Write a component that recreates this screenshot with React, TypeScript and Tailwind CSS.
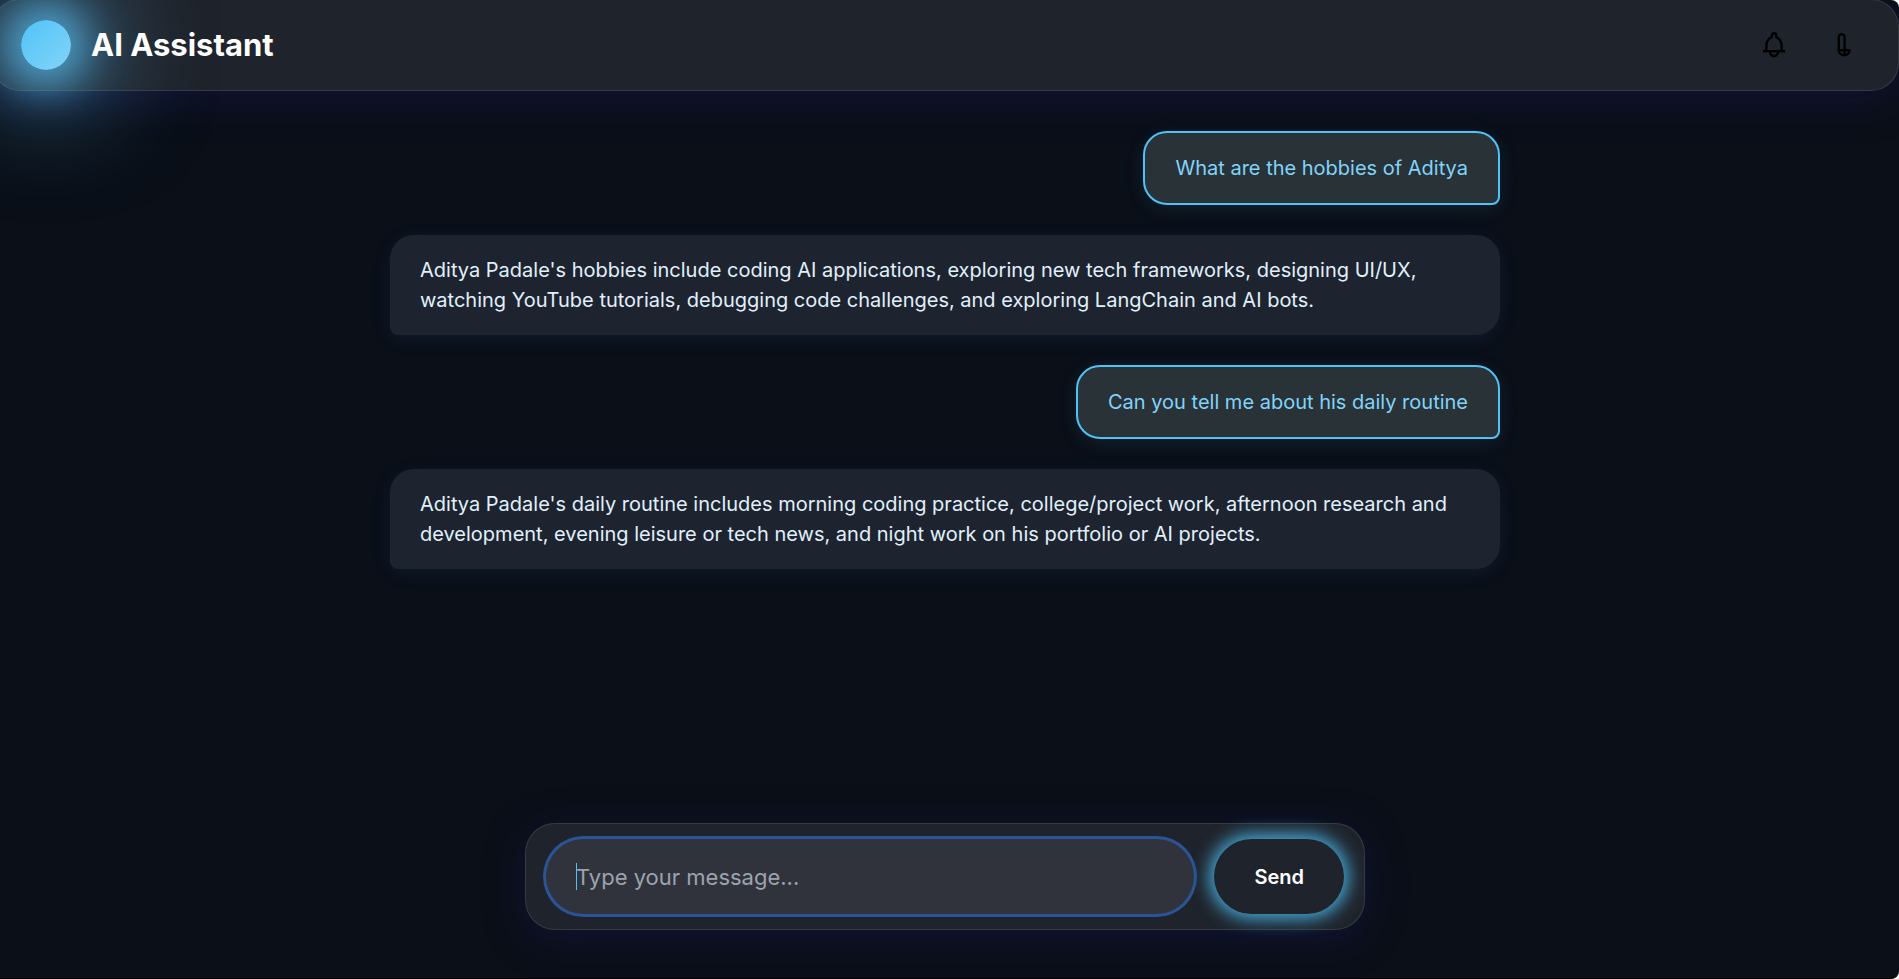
import { useState } from "react";

type Message = { id: number; from: "user" | "bot"; text: string };

const messages: Message[] = [
  { id: 1, from: "user", text: "What are the hobbies of Aditya" },
  {
    id: 2,
    from: "bot",
    text: "Aditya Padale's hobbies include coding AI applications, exploring new tech frameworks, designing UI/UX, watching YouTube tutorials, debugging code challenges, and exploring LangChain and AI bots.",
  },
  { id: 3, from: "user", text: "Can you tell me about his daily routine" },
  {
    id: 4,
    from: "bot",
    text: "Aditya Padale's daily routine includes morning coding practice, college/project work, afternoon research and development, evening leisure or tech news, and night work on his portfolio or AI projects.",
  },
];

function BellIcon() {
  return (
    <svg width="24" height="28" viewBox="0 0 24 28" fill="none" stroke="#000" strokeWidth="2.4" strokeLinejoin="round" aria-hidden="true">
      <path d="M3 20.2c1.2-.6 1.4-1.4 1.4-2.6v-3.1c0-3.6 1.7-6.4 4.9-8.2.4-.3.6-.6.6-1.1V4.3a2.1 2.1 0 0 1 4.2 0v.9c0 .5.2.8.6 1.1 3.2 1.8 4.9 4.6 4.9 8.2v3.1c0 1.2.2 2 1.4 2.6" />
      <path d="M1 20.2h22" />
      <path d="M8 21a4 4 0 0 0 8 0" />
    </svg>
  );
}

function SpoonIcon() {
  return (
    <svg width="24" height="28" viewBox="0 0 24 28" fill="none" stroke="#000" strokeWidth="2.4" strokeLinejoin="round" aria-hidden="true">
      <path d="M6.8 19.2V6a2.9 2.9 0 0 1 5.8 0v18" />
      <path d="M6.8 19.2h10.7c0 3-2.2 5-5.3 5s-5.400-2-5.400-5z" />
    </svg>
  );
}

function Bubble({ message }: { message: Message }) {
  return message.from === "user" ? (
    <li className="self-end rounded-3xl rounded-br-lg border-2 border-[#4fc3f7] bg-[#283237] px-[30px] py-5 text-[#81d4fa] shadow-[0_4px_20px_rgba(79,195,247,0.1)]">
      {message.text}
    </li>
  ) : (
    <li className="self-stretch rounded-3xl rounded-bl-lg bg-[#1d2430] px-[30px] py-5 text-[#e1f0fb] shadow-[0_4px_20px_rgba(79,150,247,0.09)]">
      {message.text}
    </li>
  );
}

export default function App() {
  const [draft, setDraft] = useState("");

  return (
    <div className="bg-white font-[Inter,sans-serif]">
      <div className="flex min-h-screen flex-col overflow-hidden rounded-r-lg border-b border-black bg-[#0a0f18]">
        <header className="-mt-px -ml-2 flex items-center justify-between rounded-[28px] border border-white/10 bg-[#1f232b] px-7 py-5 shadow-[0_8px_40px_rgba(31,27,90,0.4)]">
          <div className="flex items-center gap-5">
            <div className="size-[50px] rounded-full bg-linear-135 from-[#4fc3f7] to-[#81d4fa] shadow-[0_0_40px_16px_rgba(90,190,240,0.75),0_0_100px_40px_rgba(90,180,230,0.5)]" />
            <h1 className="relative text-[31px] leading-9 font-bold text-white">AI Assistant</h1>
          </div>
          <div className="flex items-center gap-[18px]">
            <button type="button" aria-label="Notifications" className="px-3.5">
              <BellIcon />
            </button>
            <button type="button" aria-label="Tools" className="px-3.5">
              <SpoonIcon />
            </button>
          </div>
        </header>

        <main className="-ml-[9px] flex grow flex-col items-center pt-10">
          <ul className="flex w-full max-w-[1110px] flex-col gap-[30px] text-xl leading-[30px]">
            {messages.map((m) => (
              <Bubble key={m.id} message={m} />
            ))}
          </ul>
        </main>

        <footer className="-ml-[9px] flex justify-center pt-10 pb-12">
          <form
            onSubmit={(e) => e.preventDefault()}
            className="flex w-full max-w-[840px] gap-5 rounded-[30px] border border-white/10 bg-[#1f232b] px-5 py-[15px] shadow-[0_8px_40px_rgba(31,27,90,0.4)]"
          >
            <div className="relative flex grow items-center">
              <input
                type="text"
                aria-label="Message"
                value={draft}
                onChange={(e) => setDraft(e.target.value)}
                placeholder="Type your message..."
                className="h-[75px] w-full rounded-full bg-[#30333c] px-[30px] text-[22px] text-white caret-transparent ring-3 ring-[#2b5497] outline-none placeholder:text-[#9ca3af]"
              />
              <span className="absolute left-[30px] h-[27px] w-px bg-[#4fc3f7]" />
            </div>
            <button
              type="submit"
              className="h-[75px] rounded-full bg-[#1f232b] px-10 text-xl font-semibold text-white shadow-[0_0_18px_4px_rgba(79,195,247,0.9)]"
            >
              Send
            </button>
          </form>
        </footer>
      </div>
    </div>
  );
}
